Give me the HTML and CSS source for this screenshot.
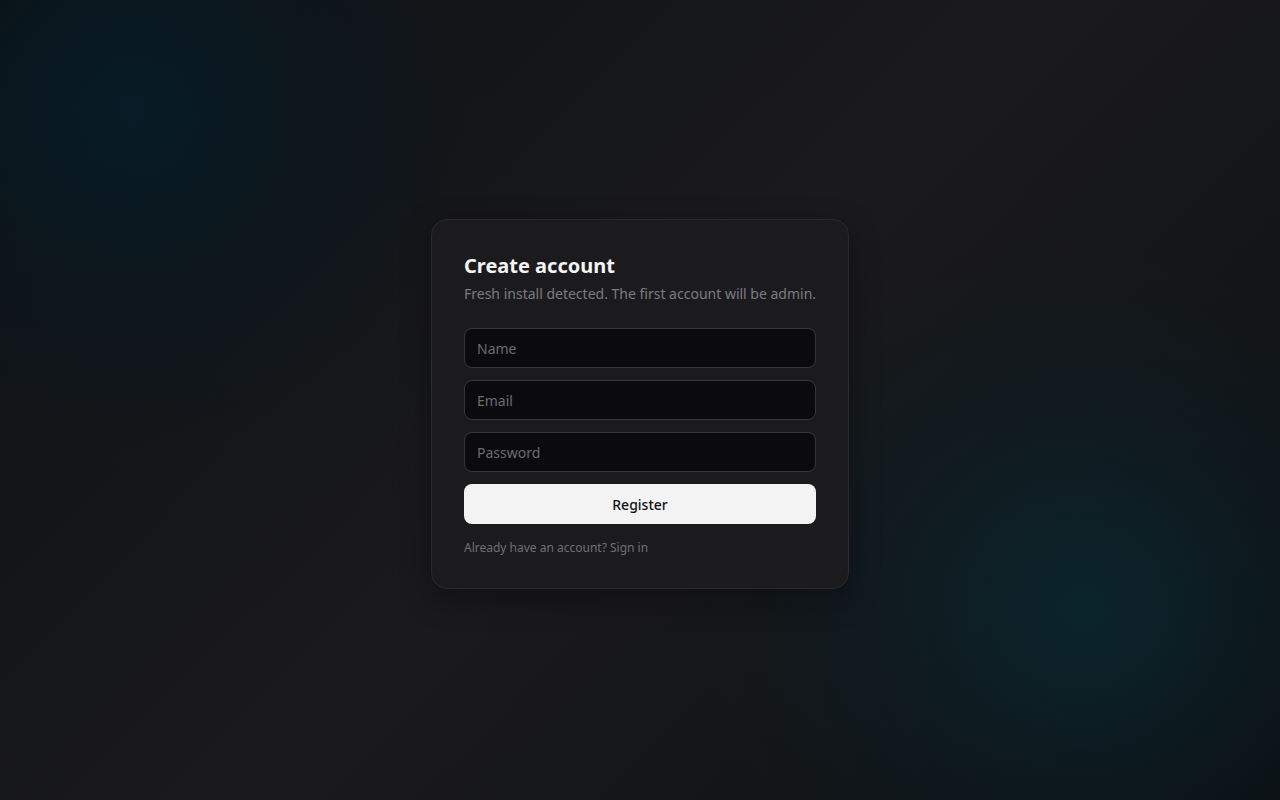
FILE: index.html
```html
<!DOCTYPE html>
<html lang="en">
<head>
<meta charset="utf-8">
<title>Create account</title>
<link rel="stylesheet" href="styles.css">
</head>
<body>
<main class="page">
  <form class="card">
    <h1 class="title">Create account</h1>
    <p class="subtitle">Fresh install detected. The first account will be admin.</p>
    <div class="fields">
      <input class="field" type="text" placeholder="Name">
      <input class="field" type="email" placeholder="Email">
      <input class="field" type="password" placeholder="Password">
      <button class="btn" type="button">Register</button>
    </div>
    <p class="foot">Already have an account? <a class="link" href="#">Sign in</a></p>
  </form>
</main>
</body>
</html>
```

FILE: styles.css
```css
* { box-sizing: border-box; }
html, body { height: 100%; }
body {
  margin: 0;
  font-family: "Noto Sans", "Open Sans", sans-serif;
  color: #f4f4f5;
  background:
    radial-gradient(circle 360px at 130px 110px, rgba(6, 30, 42, 0.85) 0%, rgba(6, 26, 36, 0.45) 50%, rgba(6, 20, 28, 0) 100%),
    radial-gradient(ellipse 380px 360px at 1085px 610px, rgba(10, 38, 46, 0.9) 0%, rgba(10, 32, 40, 0.5) 50%, rgba(10, 28, 34, 0) 100%),
    linear-gradient(135deg, #0c0d10 0%, #141517 25%, #1a1a1c 50%, #141517 75%, #0b0c0e 100%);
}
.page {
  min-height: 100%;
  display: flex;
  align-items: center;
  justify-content: center;
  padding-top: 8px;
}
.card {
  width: 418px;
  padding: 32px;
  background: #1b1b1d;
  border: 1px solid #2a2a2d;
  border-radius: 16px;
  box-shadow: 0 10px 30px rgba(0, 0, 0, 0.35);
}
.title {
  margin: 0;
  font-size: 20px;
  line-height: 28px;
  font-weight: 700;
  color: #f4f4f5;
}
.subtitle {
  margin: 4px 0 0;
  font-size: 14px;
  line-height: 20px;
  color: #7c7c82;
  white-space: nowrap;
}
.fields {
  margin-top: 24px;
  display: flex;
  flex-direction: column;
  gap: 12px;
}
.field {
  height: 40px;
  padding: 0 12px;
  background: #0b0b0d;
  border: 1px solid #37373b;
  border-radius: 8px;
  font-family: inherit;
  font-size: 14px;
  color: #f4f4f5;
  outline: none;
}
.field::placeholder { color: #6c6c72; }
.btn {
  height: 40px;
  border: none;
  border-radius: 8px;
  background: #f3f3f3;
  color: #111113;
  font-family: inherit;
  font-size: 14px;
  font-weight: 500;
  cursor: pointer;
}
.foot {
  margin: 16px 0 0;
  font-size: 12px;
  line-height: 16px;
  color: #707075;
}
.link { color: #707075; font-weight: 400; text-decoration: none; }
```
